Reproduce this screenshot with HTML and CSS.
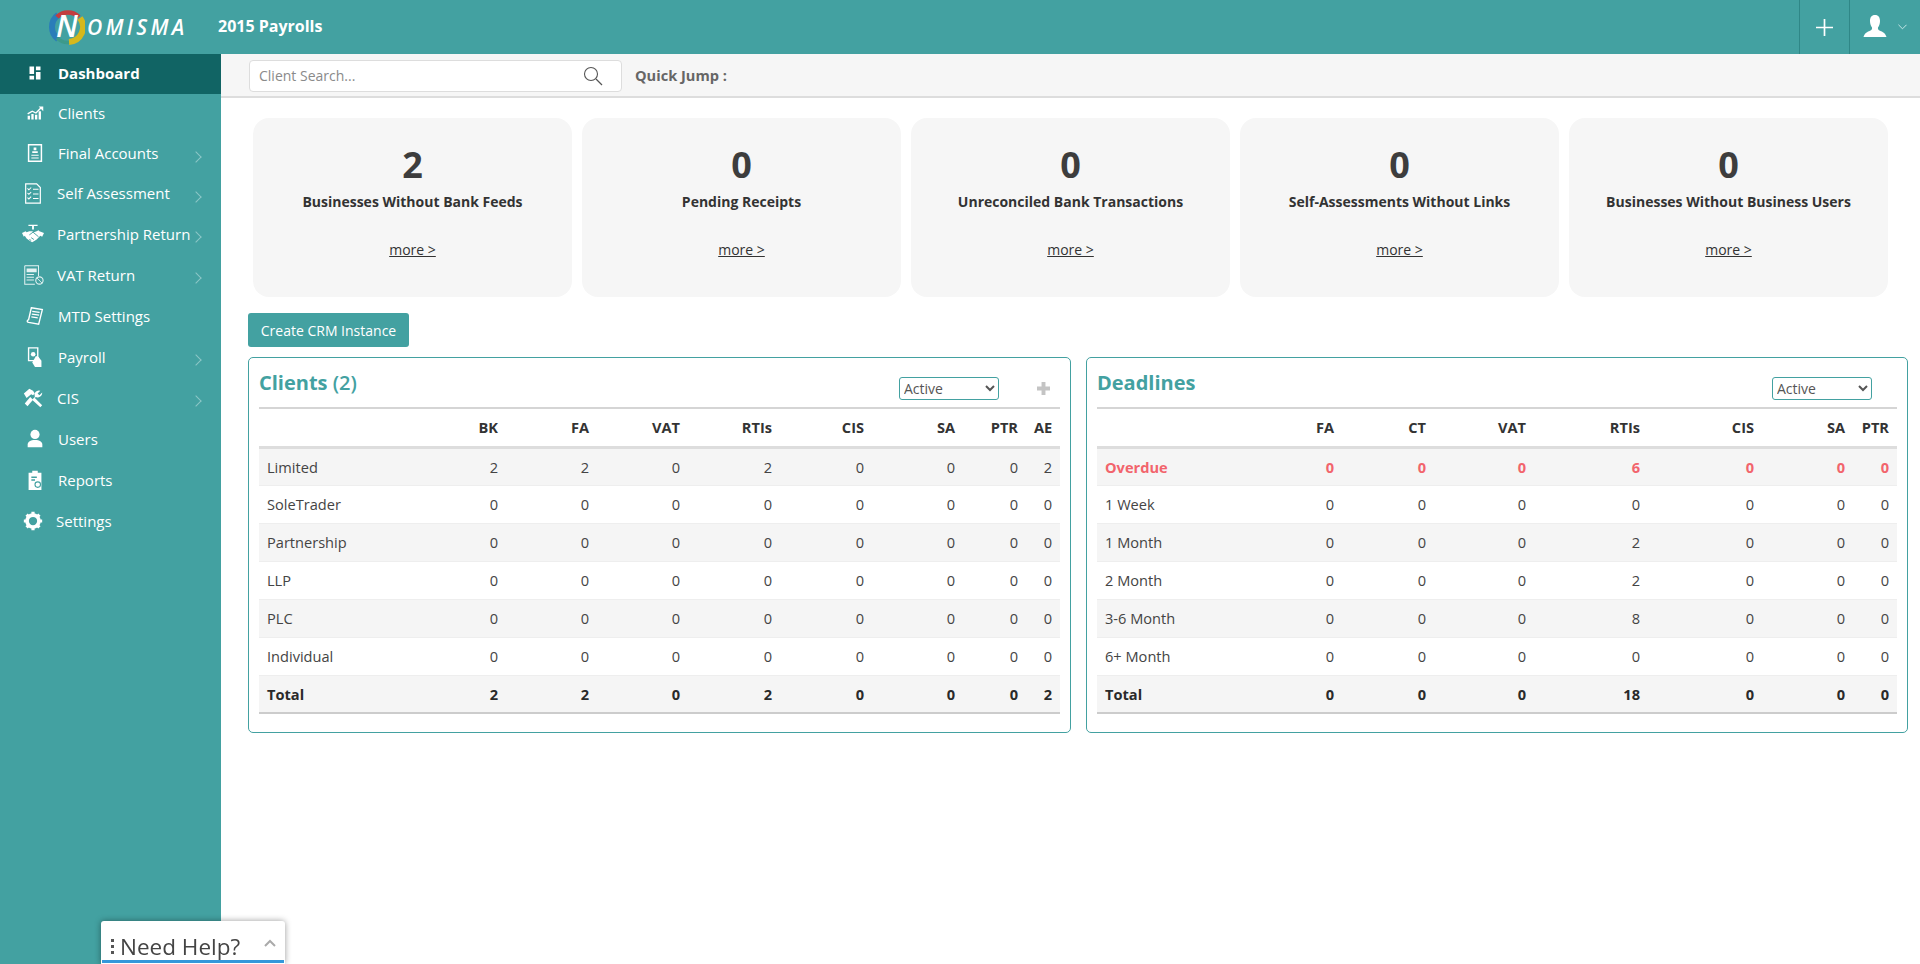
FILE: index.html
```html
<!DOCTYPE html>
<html lang="en">
<head>
    <meta charset="UTF-8">
    <meta name="viewport" content="width=device-width, initial-scale=1.0">
    <title>Nomisma Dashboard</title>
    <link rel="stylesheet" href="styles.css">
</head>
<body>
    <header class="topbar">
        <div class="brand">
            <svg class="logo-ring" viewBox="0 0 36 36" width="36" height="36">
                <path d="M9 30A15 15 0 0 1 9 6" fill="none" stroke="#2a7db9" stroke-width="6"/>
                <path d="M8 8A15.500 15.500 0 0 1 30 8" fill="none" stroke="#c33d3f" stroke-width="4.500"/>
                <path d="M31 9A15 15 0 0 1 20 33" fill="none" stroke="#d6b81c" stroke-width="6"/>
                <path d="M20 33.500A15 15 0 0 1 8 29" fill="none" stroke="#3d9a8a" stroke-width="3.500"/>
            </svg>
            <span class="logo-n">N</span><span class="logo-text">OMISMA</span>
        </div>
        <div class="page-title">2015 Payrolls</div>
        <div class="top-actions">
            <div class="top-btn add-btn">
                <svg viewBox="0 0 16 16" width="17" height="17"><path d="M8 0v16M0 8h16" stroke="#fff" stroke-width="1.600"/></svg>
            </div>
            <div class="top-btn user-btn">
                <svg viewBox="0 0 24 24" width="24" height="24"><path d="M12 0c3.600 0 5 2.600 5 6 0 2.600-.9 5-2 6.500-.4 1.600.5 2.500 2 3.200 2.600 1.100 5.400 2.200 6.500 6.300H.500c1.100-4.100 3.900-5.200 6.500-6.300 1.500-.7 2.400-1.600 2-3.200C7.900 11 7 8.600 7 6c0-3.400 1.400-6 5-6z" fill="#fff"/></svg>
                <svg class="chev" viewBox="0 0 10 6" width="9" height="6"><path d="M.5.500l4.500 4.500 4.500-4.500" fill="none" stroke="#d5eeee" stroke-width="1"/></svg>
            </div>
        </div>
    </header>

    <div class="layout">
        <nav class="sidebar">
            <a class="nav-item active">
                <svg class="nav-icon" viewBox="0 0 24 24"><path d="M6 5h5v8H6zM13 5h5v4h-5zM6 15h5v4H6zM13 11h5v8h-5z" fill="#fff"/></svg>
                <span>Dashboard</span>
            </a>
            <a class="nav-item">
                <svg class="nav-icon" viewBox="0 0 24 24"><path d="M4 19v-4h2.500v4zM8 19v-6h2.500v6zM12 19v-5h2.500v5zM16 19v-9h2.500v9z" fill="#fff"/><path d="M4 13l5-3 4 2 6-6" fill="none" stroke="#fff" stroke-width="1.500"/><path d="M16 5h5v5z" fill="#fff"/></svg>
                <span>Clients</span>
            </a>
            <a class="nav-item has-sub">
                <svg class="nav-icon" viewBox="0 0 24 24"><path d="M5 3h14v18H5z" fill="none" stroke="#fff" stroke-width="1.600"/><path d="M10.500 6h3v3h-3zM9 10h6v2H9zM8 14h8v1H8zM8 17h8v1H8z" fill="#fff"/></svg>
                <span>Final Accounts</span>
            </a>
            <a class="nav-item has-sub">
                <svg class="nav-icon wide" viewBox="0 0 24 24"><path d="M4 2h12l4 4v17H4z" fill="none" stroke="#fff" stroke-width="1.300"/><path d="M6 7l1.500 1.500L10 6M6 12l1.500 1.500L10 11M6 17l1.500 1.500L10 16M12 8h6M12 13h6M12 18h6" fill="none" stroke="#fff" stroke-width="1.100"/></svg>
                <span>Self Assessment</span>
            </a>
            <a class="nav-item has-sub">
                <svg class="nav-icon wide" viewBox="0 0 24 24">
                    <path d="M0 11l4-2 1 1 3-1h3l2 1 3-1 2-1 1 1 5 2-2 4-2-1-4 4-3 2-2 1-3-2-3-2-2-3-1 1z" fill="#fff"/>
                    <path d="M8 13l4-3 6 5M10 16l3 2M8 18l2 1" fill="none" stroke="#43a1a1" stroke-width="1"/>
                    <path d="M7 2h10v1.200h-4V7h-2V3.200H7z" fill="#fff"/>
                </svg>
                <span>Partnership Return</span>
            </a>
            <a class="nav-item has-sub">
                <svg class="nav-icon wide" viewBox="0 0 24 24"><path d="M3 2h15v11" fill="none" stroke="#e3f2f2" stroke-width="1.100"/><path d="M3 2v20h11" fill="none" stroke="#e3f2f2" stroke-width="1.100"/><path d="M5 5h11v4H5zM5 11h8v1H5zM5 14h8v1H5zM5 17h8v1H5z" fill="#e3f2f2"/><circle cx="19" cy="18" r="4" fill="none" stroke="#e3f2f2" stroke-width="1.200"/><path d="M16 15l6 6" stroke="#e3f2f2"/></svg>
                <span>VAT Return</span>
            </a>
            <a class="nav-item">
                <svg class="nav-icon" viewBox="0 0 24 24"><path d="M8 3l12 2-4 16-11-2c-2-.5-2-2 0-3z" fill="none" stroke="#fff" stroke-width="1.500"/><path d="M9 7l8 1M8.500 10l8 1M8 13l7 1" stroke="#fff" stroke-width="1.200"/></svg>
                <span>MTD Settings</span>
            </a>
            <a class="nav-item has-sub">
                <svg class="nav-icon" viewBox="0 0 24 24"><path d="M5 2h10v14H5z" fill="none" stroke="#fff" stroke-width="1.500"/><circle cx="10" cy="9" r="2.500" fill="#fff"/><path d="M13 11l3 1 3 4v7h-7l-3-5z" fill="#fff"/></svg>
                <span>Payroll</span>
            </a>
            <a class="nav-item has-sub">
                <svg class="nav-icon wide" viewBox="0 0 24 24"><path d="M2 7l6-5 4 2 2 3-2 2-2-1L5 12z" fill="#fff"/><path d="M9 11l3 3-6 7-3-3z" fill="#fff"/><path d="M22 6a5 5 0 0 1-7 5l-1 1 8 8-2 2-9-8 3-3a5 5 0 0 1 6-7l-3 3 2 2z" fill="#fff"/></svg>
                <span>CIS</span>
            </a>
            <a class="nav-item">
                <svg class="nav-icon" viewBox="0 0 24 24"><circle cx="12" cy="7" r="5" fill="#fff"/><path d="M4 21v-3c0-3 3-5 8-5s8 2 8 5v3z" fill="#fff"/></svg>
                <span>Users</span>
            </a>
            <a class="nav-item">
                <svg class="nav-icon" viewBox="0 0 24 24"><path d="M5 4h4V2h6v2h4v19H5z" fill="#fff"/><path d="M8 9h6M8 12h4" stroke="#43a1a1" stroke-width="1.400"/><circle cx="15" cy="17" r="3" fill="none" stroke="#43a1a1" stroke-width="1.200"/></svg>
                <span>Reports</span>
            </a>
            <a class="nav-item nav-settings">
                <svg class="nav-icon wide" viewBox="0 0 24 24"><circle cx="12" cy="12" r="6.500" fill="none" stroke="#fff" stroke-width="4"/><path d="M12 2v20M2 12h20M5 5l14 14M19 5L5 19" stroke="#fff" stroke-width="3.500" stroke-dasharray="3.500 13 3.500 13"/></svg>
                <span>Settings</span>
            </a>
        </nav>

        <main class="main">
            <div class="searchbar">
                <div class="search-box">
                    <input class="search-input" type="text" placeholder="Client Search...">
                    <svg viewBox="0 0 20 20" width="20" height="20"><circle cx="8" cy="8" r="6.500" fill="none" stroke="#555" stroke-width="1.100"/><path d="M13 13l6 6" stroke="#555" stroke-width="1.200"/></svg>
                </div>
                <div class="quick-jump">Quick Jump :</div>
            </div>

            <section class="cards">
                <div class="card"><div class="card-num">2</div><div class="card-title">Businesses Without Bank Feeds</div><a class="card-more">more &gt;</a></div>
                <div class="card"><div class="card-num">0</div><div class="card-title">Pending Receipts</div><a class="card-more">more &gt;</a></div>
                <div class="card"><div class="card-num">0</div><div class="card-title">Unreconciled Bank Transactions</div><a class="card-more">more &gt;</a></div>
                <div class="card"><div class="card-num">0</div><div class="card-title">Self-Assessments Without Links</div><a class="card-more">more &gt;</a></div>
                <div class="card"><div class="card-num">0</div><div class="card-title">Businesses Without Business Users</div><a class="card-more">more &gt;</a></div>
            </section>

            <button class="crm-btn" type="button">Create CRM Instance</button>

            <section class="panels">
                <div class="panel">
                    <div class="panel-head">
                        <h3 class="panel-title">Clients <span class="count">(2)</span></h3>
                        <select class="status-select"><option>Active</option></select>
                        <svg class="panel-add" viewBox="0 0 12 12" width="13" height="13"><path d="M6 0v12M0 6h12" stroke="#c4c4c4" stroke-width="3.600"/></svg>
                    </div>
                    <table class="grid clients-grid">
                        <colgroup><col class="c-name"><col class="c-a"><col class="c-a"><col class="c-a"><col class="c-b"><col class="c-b"><col class="c-a"><col class="c-c"><col class="c-d"></colgroup>
                        <thead><tr><th></th><th>BK</th><th>FA</th><th>VAT</th><th>RTIs</th><th>CIS</th><th>SA</th><th>PTR</th><th>AE</th></tr></thead>
                        <tbody>
                            <tr><td>Limited</td><td>2</td><td>2</td><td>0</td><td>2</td><td>0</td><td>0</td><td>0</td><td>2</td></tr>
                            <tr><td>SoleTrader</td><td>0</td><td>0</td><td>0</td><td>0</td><td>0</td><td>0</td><td>0</td><td>0</td></tr>
                            <tr><td>Partnership</td><td>0</td><td>0</td><td>0</td><td>0</td><td>0</td><td>0</td><td>0</td><td>0</td></tr>
                            <tr><td>LLP</td><td>0</td><td>0</td><td>0</td><td>0</td><td>0</td><td>0</td><td>0</td><td>0</td></tr>
                            <tr><td>PLC</td><td>0</td><td>0</td><td>0</td><td>0</td><td>0</td><td>0</td><td>0</td><td>0</td></tr>
                            <tr><td>Individual</td><td>0</td><td>0</td><td>0</td><td>0</td><td>0</td><td>0</td><td>0</td><td>0</td></tr>
                            <tr class="total"><td>Total</td><td>2</td><td>2</td><td>0</td><td>2</td><td>0</td><td>0</td><td>0</td><td>2</td></tr>
                        </tbody>
                    </table>
                </div>

                <div class="panel">
                    <div class="panel-head">
                        <h3 class="panel-title">Deadlines</h3>
                        <select class="status-select deadlines-select"><option>Active</option></select>
                    </div>
                    <table class="grid deadlines-grid">
                        <colgroup><col class="d-name"><col class="d-a"><col class="d-a"><col class="d-b"><col class="d-c"><col class="d-c"><col class="d-e"><col class="d-d"></colgroup>
                        <thead><tr><th></th><th>FA</th><th>CT</th><th>VAT</th><th>RTIs</th><th>CIS</th><th>SA</th><th>PTR</th></tr></thead>
                        <tbody>
                            <tr class="overdue"><td>Overdue</td><td>0</td><td>0</td><td>0</td><td>6</td><td>0</td><td>0</td><td>0</td></tr>
                            <tr><td>1 Week</td><td>0</td><td>0</td><td>0</td><td>0</td><td>0</td><td>0</td><td>0</td></tr>
                            <tr><td>1 Month</td><td>0</td><td>0</td><td>0</td><td>2</td><td>0</td><td>0</td><td>0</td></tr>
                            <tr><td>2 Month</td><td>0</td><td>0</td><td>0</td><td>2</td><td>0</td><td>0</td><td>0</td></tr>
                            <tr><td>3-6 Month</td><td>0</td><td>0</td><td>0</td><td>8</td><td>0</td><td>0</td><td>0</td></tr>
                            <tr><td>6+ Month</td><td>0</td><td>0</td><td>0</td><td>0</td><td>0</td><td>0</td><td>0</td></tr>
                            <tr class="total"><td>Total</td><td>0</td><td>0</td><td>0</td><td>18</td><td>0</td><td>0</td><td>0</td></tr>
                        </tbody>
                    </table>
                </div>
            </section>
        </main>
    </div>

    <div class="help-widget">
        <span class="help-dots"></span><span class="help-text">Need Help?</span>
        <svg class="help-chev" viewBox="0 0 12 8" width="12" height="8"><path d="M1 7l5-5 5 5" fill="none" stroke="#aaa" stroke-width="2"/></svg>
    </div>
</body>
</html>
```

FILE: styles.css
```css
* { box-sizing: border-box; }

html, body { height: 100%; }
body { margin: 0; font-family: "Open Sans", Arial, sans-serif; font-size: 14px; color: #333; overflow: hidden; background: #fff; }

/* top bar */
.topbar { display: flex; align-items: center; height: 54px; background: #43a1a1; color: #fff; }
.brand { display: flex; align-items: center; width: 218px; padding-left: 49px; position: relative; height: 54px; }
.logo-ring { flex: none; margin-top: -1px; }
.logo-n { position: absolute; left: 56px; top: 9px; font-size: 30px; line-height: 34px; font-style: italic; font-weight: 600; color: #fff; }
.logo-text { font-size: 21px; font-style: italic; font-weight: 600; letter-spacing: 3.3px; margin-left: 2px; margin-top: -1px; }
.page-title { font-size: 16px; font-weight: 700; margin-top: -3px; }
.top-actions { display: flex; margin-left: auto; height: 54px; }
.top-btn { display: flex; align-items: center; height: 54px; border-left: 1px solid #2f8787; }
.add-btn { width: 50px; justify-content: center; }
.user-btn { width: 71px; padding-left: 13px; gap: 11px; }
.chev { margin-top: -1px; }

.layout { display: flex; height: 910px; }

/* sidebar */
.sidebar { width: 221px; flex: none; background: #43a1a1; }
.nav-item { display: flex; align-items: center; height: 41px; padding: 0 0 2px 24px; color: #fff; font-size: 15px; position: relative; }
.nav-item:nth-child(-n+4) { height: 40px; }
.nav-item span { margin-left: 12px; }
.nav-icon { width: 22px; height: 22px; flex: none; }
.nav-icon.wide { margin-left: -2px; margin-right: 1px; }
.nav-item.active { background: #116464; font-weight: 700; }
.nav-item.has-sub::after { content: ""; position: absolute; left: 192px; top: 19px; width: 7px; height: 7px; border-top: 1px solid #8cc7c7; border-right: 1px solid #8cc7c7; transform: rotate(45deg); }
.nav-settings span { margin-left: 11px; }

/* search row */
.main { flex: 1; min-width: 0; }
.searchbar { display: flex; align-items: center; height: 44px; padding-left: 28px; background: #f6f6f6; border-bottom: 2px solid #ddd; }
.search-box { display: flex; align-items: center; width: 373px; height: 32px; padding: 0 9px; margin-top: 1px; background: #fff; border: 1px solid #ddd; border-radius: 4px; }
.search-input { flex: 1; min-width: 0; border: 0; outline: 0; padding: 0; font: 14px "Open Sans", sans-serif; color: #333; }
.search-input::placeholder { color: #8a8a8a; }
.search-box svg { margin-right: 9px; }
.quick-jump { margin: -1px 0 0 13px; font-weight: 700; font-size: 14.6px; color: #666; }

/* summary cards */
.cards { display: flex; gap: 10px; margin: 20px 0 16px 32px; width: 1635px; }
.card { flex: 1; height: 179px; padding-top: 25px; background: #f6f6f6; border-radius: 16px; text-align: center; }
.card-num { font-size: 36px; font-weight: 700; line-height: 44px; color: #3d3d3d; }
.card-title { margin-top: 5px; font-weight: 700; font-size: 14px; line-height: 20px; color: #333; }
.card-more { display: block; margin-top: 28px; line-height: 20px; color: #333; text-decoration: underline; }

.crm-btn { display: block; height: 34px; width: 161px; margin-left: 27px; padding: 0; border: 0; border-radius: 3px; background: #43a1a1; color: #fff; font: 14px "Open Sans", sans-serif; }

/* panels */
.panels { display: flex; gap: 15px; margin: 10px 12px 0 27px; }
.panel { flex: 1; height: 376px; padding: 0 10px; border: 1px solid #43a1a1; border-radius: 5px; }
.panel-head { display: flex; height: 51px; border-bottom: 2px solid #d5d5d5; position: relative; }
.panel-title { margin: 11px 0 0; font-size: 20px; line-height: 27px; font-weight: 700; color: #43a1a1; }
.count { font-weight: 600; }
.status-select { position: absolute; left: 640px; top: 19px; width: 100px; height: 23px; padding: 0; background: #fff; border: 1px solid #43a1a1; border-radius: 3px; font: 14px "Open Sans", sans-serif; color: #555; }
.deadlines-select { left: 675px; }
.panel-add { position: absolute; left: 778px; top: 24px; }

/* tables */
.grid { width: 100%; border-collapse: collapse; table-layout: fixed; }
.grid th, .grid td { padding: 0 8px; text-align: right; height: 38px; font-size: 14.6px; color: #444; }
.grid td { border-top: 1px solid #eee; }
.grid th { font-weight: 700; color: #333; border-bottom: 3px solid #ddd; }
.grid td:first-child { text-align: left; }
.grid tbody tr:first-child td { border-top: 0; }
.grid tbody tr:nth-child(odd) { background: #f5f5f5; }
.grid .total td { font-weight: 700; border-bottom: 2px solid #ccc; color: #2a2a2a; }
.grid .overdue td { font-weight: 700; color: #f2646c; }

.c-name { width: 156px; }
.c-a { width: 91px; }
.c-b { width: 92px; }
.c-c { width: 63px; }
.c-d { width: 34px; }
.d-name { width: 153px; }
.d-a { width: 92px; }
.d-b { width: 100px; }
.d-c { width: 114px; }
.d-e { width: 91px; }
.d-d { width: 44px; }

/* help widget */
.help-widget { position: fixed; left: 101px; top: 921px; width: 184px; height: 43px; display: flex; align-items: center; padding: 8px 0 0 10px; background: #fff; border-radius: 3px 3px 0 0; box-shadow: 0 0 6px rgba(0, 0, 0, .4); color: #444; }
.help-widget::after { content: ""; position: absolute; left: 1px; right: 1px; bottom: 1px; height: 3px; background: #3498db; }
.help-dots { flex: none; width: 3px; height: 3px; margin: 0 6px 0 0; background: #555; box-shadow: 0 -6px 0 #555, 0 6px 0 #555; }
.help-text { font-size: 22.5px; line-height: 28px; }
.help-chev { position: absolute; right: 9px; top: 18px; }
```
